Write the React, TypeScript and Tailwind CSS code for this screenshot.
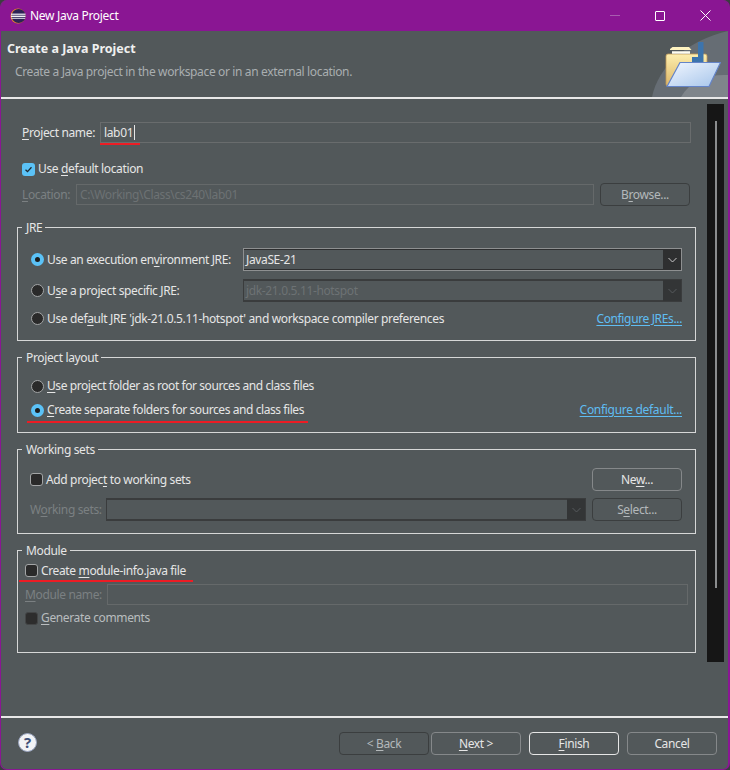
import type { ReactNode } from "react";

function Radio({ on }: { on?: boolean }) {
  return on ? (
    <span className="flex h-[13px] w-[13px] shrink-0 items-center justify-center rounded-full bg-[#5bc2f7]">
      <span className="h-[5px] w-[5px] rounded-full bg-[#1c1c1c]" />
    </span>
  ) : (
    <span className="h-[13px] w-[13px] shrink-0 rounded-full border border-[#a3a5a6] bg-[#2a2a2a]" />
  );
}

function Check({ on, dim }: { on?: boolean; dim?: boolean }) {
  if (on) {
    return (
      <span className="flex h-[13px] w-[13px] shrink-0 items-center justify-center rounded-[3px] bg-[#5bc2f7]">
        <svg width="9" height="9" viewBox="0 0 9 9" fill="none">
          <path d="M1.5 4.8 3.5 6.6 7.5 2.2" stroke="#1c2a33" strokeWidth="1.3" />
        </svg>
      </span>
    );
  }
  return (
    <span
      className={
        dim
          ? "h-[13px] w-[13px] shrink-0 rounded-[3px] border border-[#434546] bg-[#2d2d2d]"
          : "h-[13px] w-[13px] shrink-0 rounded-[3px] border border-[#a3a5a6] bg-[#2a2a2a]"
      }
    />
  );
}

function Btn({ children, tone = "normal" }: { children: ReactNode; tone?: "normal" | "dim" | "focus" }) {
  const cls =
    tone === "dim"
      ? "border-[#3b3e3f] text-[#b4b8ba]"
      : tone === "focus"
        ? "border-[#e6e6e6] text-[#e6e6e6]"
        : "border-[#85888a] text-[#e6e6e6]";
  return (
    <div className={`flex h-[23px] w-[90px] shrink-0 items-center justify-center rounded-[4px] border ${cls}`}>
      {children}
    </div>
  );
}

function Combo({ width, disabled, children }: { width: string; disabled?: boolean; children?: ReactNode }) {
  return (
    <div
      className={`flex h-[23px] shrink-0 border ${width} ${disabled ? "border-[#3a3c3d] text-[#6d7274]" : "border-[#8e9091] text-[#e6e6e6]"}`}
    >
      <div
        className={`flex flex-1 items-center border-b border-t pl-[2px] ${disabled ? "border-[#3a3c3d]" : "border-[#2e2f30]"}`}
      >
        {children}
      </div>
      <div
        className={`flex w-[18px] items-center justify-center ${disabled ? "bg-[#333536]" : "bg-[#2e2f30]"}`}
      >
        <svg width="9" height="6" viewBox="0 0 9 6" fill="none">
          <path d="M.5 1 4.5 5 8.5 1" stroke={disabled ? "#565a5c" : "#c8c8c8"} />
        </svg>
      </div>
    </div>
  );
}

function RedLine({ className }: { className: string }) {
  return <div className={`absolute h-[2px] bg-[#ed1c24] ${className}`} />;
}

function Group({ title, className, children }: { title: string; className: string; children: ReactNode }) {
  return (
    <fieldset className="ml-[16px] mt-[9px] w-[679px] border border-[#d6d7d7]">
      <legend className="ml-[4px] h-[15px] pl-[4px] pr-[3px] leading-[15px]">{title}</legend>
      <div className={className}>{children}</div>
    </fieldset>
  );
}

function EclipseIcon() {
  return (
    <svg width="16" height="16" viewBox="0 0 16 16" className="shrink-0">
      <circle cx="8" cy="8" r="7.5" fill="#f08a24" />
      <circle cx="8.6" cy="8" r="7" fill="#2c2255" />
      <rect x="1" y="5.6" width="14.5" height="1.2" fill="#f3f0f7" />
      <rect x="1" y="7.6" width="14.5" height="1.4" fill="#f3f0f7" />
      <rect x="1.4" y="9.8" width="13.8" height="1" fill="#e2deea" />
    </svg>
  );
}

function FolderIcon() {
  return (
    <svg width="56" height="46" viewBox="0 0 56 46" className="absolute right-[7px] top-[11px]">
      <defs>
        <linearGradient id="back" x1="0" y1="0" x2="0" y2="1">
          <stop offset="0" stopColor="#fdeeae" />
          <stop offset="1" stopColor="#dcb668" />
        </linearGradient>
        <linearGradient id="front" x1="0" y1="0" x2="1" y2="1">
          <stop offset="0" stopColor="#f2f7ff" />
          <stop offset="1" stopColor="#a5c4ea" />
        </linearGradient>
      </defs>
      <path d="M5 7 7.500 5H24l2.500 3H5Z" fill="#fff3c0" />
      <path d="M1 14Q1 12 3 12H40q2 0 2 2v8L4 44H3q-2 0-2-2Z" fill="url(#back)" stroke="#c09a58" strokeWidth=".8" />
      <path d="M7 10.500h18" stroke="#fffdf0" strokeWidth="2.500" />
      <path d="M33 0h5.500v21H27v-6h6Z" fill="#3c74ad" />
      <path d="M15 20.500H55.500L44 44.500H2Z" fill="url(#front)" stroke="#6484c8" strokeWidth="1.200" strokeLinejoin="round" />
    </svg>
  );
}

export default function App() {
  return (
    <div
      className="h-[770px] w-[730px] bg-[#3b3d3f] text-[12px] tracking-[-0.36px] text-[#e6e6e6] underline-offset-2"
      style={{ fontFamily: '"Noto Sans", sans-serif' }}
    >
      <div className="flex h-full flex-col overflow-hidden rounded-[7px] border-b border-l border-r-2 border-[#8a1693] bg-[#52585a]">
        {/* title bar */}
        <div className="flex h-[31px] shrink-0 items-center bg-[#8a1693] pl-[9px] text-white">
          <EclipseIcon />
          <span className="ml-[4px] tracking-[-0.3px]">New Java Project</span>
          <div className="ml-auto flex items-center pr-[17px]">
            <div className="h-px w-[10px] bg-[#a85cb0]" />
            <div className="ml-[35px] h-[10px] w-[10px] rounded-[1px] border border-white" />
            <svg width="11" height="11" viewBox="0 0 11 11" className="ml-[35px]">
              <path d="M.5.5l10 10M10.500.5l-10 10" stroke="#fff" />
            </svg>
          </div>
        </div>

        {/* wizard banner */}
        <div className="relative h-[68px] shrink-0 overflow-hidden border-b-2 border-[#e8e8e8] pl-[6px]">
          <svg width="76" height="66" viewBox="0 0 76 66" className="absolute right-0 top-0">
            <path d="M0 66C6 36 34 10 76 0V66Z" fill="#666d74" />
            <path d="M29 66C38 50 56 43 76 44V66Z" fill="#7f858b" />
          </svg>
          <FolderIcon />
          <div className="relative pt-[9px] text-[12.5px] font-bold leading-[17px] tracking-normal text-[#f0f0f0]">
            Create a Java Project
          </div>
          <div className="relative ml-[8px] mt-[6px] leading-[17px] text-[#a9aeb0]">
            Create a Java project in the workspace or in an external location.
          </div>
        </div>

        {/* page */}
        <div className="flex flex-1">
          <div className="w-[706px] shrink-0">
            <div className="relative ml-[21px] mt-[23px] flex h-[21px] items-center">
              <span className="w-[78px]">
                <u>P</u>roject name:
              </span>
              <div className="flex h-[21px] w-[591px] items-center border border-[#696c6d] pl-[3px]">
                lab01
                <span className="ml-px h-[15px] w-px bg-[#e6e6e6]" />
              </div>
              <RedLine className="left-[78px] top-[21px] w-[40px]" />
            </div>

            <div className="ml-[21px] mt-[17px] flex h-[18px] items-center gap-[3px]">
              <Check on />
              <span>
                Use <u>d</u>efault location
              </span>
            </div>

            <div className="ml-[21px] mt-[5px] flex h-[23px] items-center text-[#7b8082]">
              <span className="w-[54px]">
                <u>L</u>ocation:
              </span>
              <div className="flex h-[21px] w-[518px] items-center border border-[#65696a] pl-[3px] text-[#6d7274]">
                C:\Working\Class\cs240\lab01
              </div>
              <div className="ml-[6px]">
                <Btn tone="dim">
                  <span>
                    B<u>r</u>owse...
                  </span>
                </Btn>
              </div>
            </div>

            <div className="-mt-[9px] pt-[14px]">
              <Group title="JRE" className="pb-[10px] pl-[13px] pr-[13px] pt-[13px]">
                <div className="flex h-[23px] items-center gap-[3px]">
                  <Radio on />
                  <span>
                    Use an execution en<u>v</u>ironment JRE:
                  </span>
                  <div className="ml-auto">
                    <Combo width="w-[439px]">JavaSE-21</Combo>
                  </div>
                </div>
                <div className="mt-[8px] flex h-[23px] items-center gap-[3px]">
                  <Radio />
                  <span>
                    U<u>s</u>e a project specific JRE:
                  </span>
                  <div className="ml-auto">
                    <Combo width="w-[439px]" disabled>
                      jdk-21.0.5.11-hotspot
                    </Combo>
                  </div>
                </div>
                <div className="mt-[5px] flex h-[23px] items-center gap-[3px]">
                  <Radio />
                  <span>
                    Use def<u>a</u>ult JRE 'jdk-21.0.5.11-hotspot' and workspace compiler preferences
                  </span>
                  <span className="ml-auto text-[#5fbdf2] underline">Configure JREs...</span>
                </div>
              </Group>
            </div>

            <Group title="Project layout" className="pb-[12px] pl-[13px] pr-[13px] pt-[11px] tracking-[-0.42px]">
              <div className="flex h-[20px] items-center gap-[3px]">
                <Radio />
                <span>
                  <u>U</u>se project folder as root for sources and class files
                </span>
              </div>
              <div className="relative mt-[4px] flex h-[20px] items-center gap-[3px]">
                <Radio on />
                <span>
                  <u>C</u>reate separate folders for sources and class files
                </span>
                <span className="ml-auto tracking-[-0.3px] text-[#5fbdf2] underline">Configure default...</span>
                <RedLine className="-left-[4px] top-[21px] w-[281px]" />
              </div>
            </Group>

            <Group title="Working sets" className="pb-[12px] pl-[12px] pr-[13px] pt-[11px]">
              <div className="flex h-[23px] items-center gap-[3px]">
                <Check />
                <span>
                  Add projec<u>t</u> to working sets
                </span>
                <div className="ml-auto">
                  <Btn>
                    <span>
                      Ne<u>w</u>...
                    </span>
                  </Btn>
                </div>
              </div>
              <div className="mt-[7px] flex h-[23px] items-center">
                <span className="w-[76px] text-[#7b8082]">
                  W<u>o</u>rking sets:
                </span>
                <Combo width="w-[480px]" disabled />
                <div className="ml-auto">
                  <Btn tone="dim">
                    <span>
                      S<u>e</u>lect...
                    </span>
                  </Btn>
                </div>
              </div>
            </Group>

            <Group title="Module" className="pb-[25px] pl-[7px] pr-[7px] pt-[3px]">
              <div className="relative flex h-[19px] items-center gap-[3px]">
                <Check />
                <span>
                  Create <u>m</u>odule-info.java file
                </span>
                <RedLine className="-left-[6px] top-[19px] w-[174px]" />
              </div>
              <div className="mt-[4px] flex h-[21px] items-center">
                <span className="w-[82px] text-[#7b8082]">
                  <u>M</u>odule name:
                </span>
                <div className="h-[21px] flex-1 border border-[#65696a]" />
              </div>
              <div className="mt-[4px] flex h-[18px] items-center gap-[3px] text-[#b9bdbf]">
                <Check dim />
                <span>
                  <u>G</u>enerate comments
                </span>
              </div>
            </Group>
          </div>

          {/* scrollbar */}
          <div className="mt-[5px] h-[558px] w-[17px] bg-[#161616] pl-[8px] pt-[17px]">
            <div className="h-[467px] w-[2px] bg-[#8b8d8e]" />
          </div>
        </div>

        {/* button bar */}
        <div className="flex h-[53px] shrink-0 items-start border-t-2 border-[#e8e8e8] pt-[14px]">
          <div className="ml-[17px] mt-[1px] flex h-[19px] w-[19px] items-center justify-center rounded-full border border-[#9aa5c0] bg-[#f2f3f6] text-[15px] font-bold leading-none text-[#3f4f78]">
            ?
          </div>
          <div className="ml-auto flex pr-[11px]">
            <Btn tone="dim">
              <span>
                {"< "}
                <u>B</u>ack
              </span>
            </Btn>
            <div className="ml-[2px]">
              <Btn>
                <span>
                  <u>N</u>ext {">"}
                </span>
              </Btn>
            </div>
            <div className="ml-[8px]">
              <Btn tone="focus">
                <span>
                  <u>F</u>inish
                </span>
              </Btn>
            </div>
            <div className="ml-[8px]">
              <Btn>Cancel</Btn>
            </div>
          </div>
        </div>
      </div>
    </div>
  );
}
